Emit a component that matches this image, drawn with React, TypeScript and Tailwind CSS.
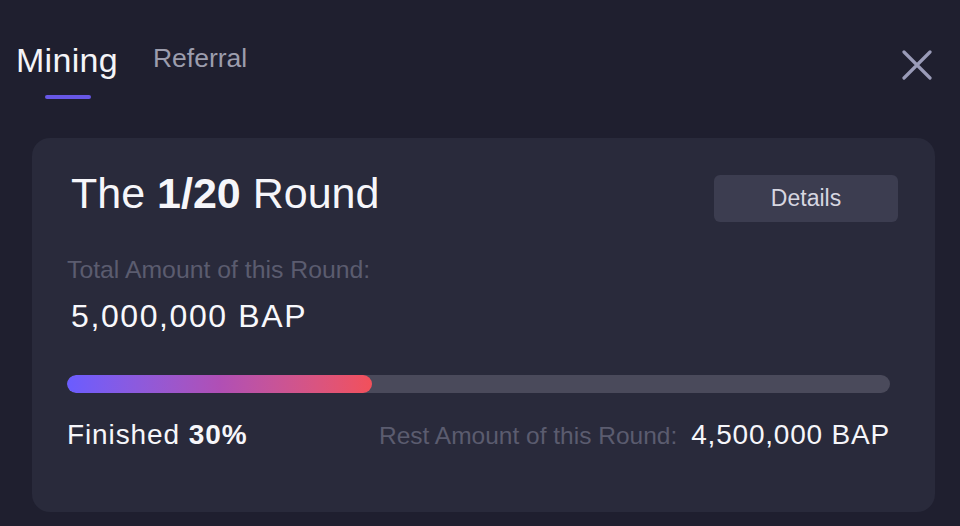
import React from "react";

export default function App() {
  const finished = 37;
  return (
    <div
      className="w-[960px] h-[526px] bg-[#1f1f2f] overflow-hidden"
      style={{ fontFamily: '"Liberation Sans", Arial, sans-serif' }}
    >
      <div className="flex items-start justify-between pl-4 pr-[28px] pt-[44px]">
        <div className="flex items-start gap-[35px]">
          <div className="flex flex-col items-center">
            <span className="text-[34px] leading-[33px] tracking-[0.3px] text-[#f4f4f8]">Mining</span>
            <span className="mt-[18px] ml-[2px] block w-[46px] h-[4px] rounded-full bg-[#6757e6]" />
          </div>
          <span className="mt-[1px] text-[26.5px] leading-[27px] text-[#9c9dad]">Referral</span>
        </div>
        <svg width="30" height="30" viewBox="0 0 30 30" className="mt-[6px]">
          <path d="M2 2 L28 28 M28 2 L2 28" stroke="#9a9bb8" strokeWidth="3.2" strokeLinecap="round" />
        </svg>
      </div>

      <div className="ml-8 mt-[39px] w-[903px] h-[374px] rounded-[18px] bg-[#292a3b] pl-[35px] pr-[45px] pt-[34px]">
        <div className="flex items-start justify-between">
          <h1 className="ml-1 text-[43px] leading-[42px] text-[#f6f6fa] font-normal">
            The <span className="font-bold">1/20</span> Round
          </h1>
          <button className="mt-[3px] -mr-2 w-[184px] h-[47px] rounded-[6px] bg-[#3c3d50] text-[23px] text-[#d6d6e0]">
            Details
          </button>
        </div>

        <div className="mt-[36px] text-[24.8px] leading-[24px] text-[#5b5c6f]">
          Total Amount of this Round:
        </div>
        <div className="mt-[18px] ml-1 text-[32px] leading-[32px] tracking-[1.6px] text-[#f8f8fc]">
          5,000,000 BAP
        </div>

        <div className="mt-[43px] h-[18px] w-full rounded-full bg-[#4a4a5b] overflow-hidden">
          <div
            className="h-full rounded-full bg-gradient-to-r from-[#6a5cff] via-[#b04fb5] to-[#f2505a]"
            style={{ width: `${finished}%` }}
          />
        </div>

        <div className="mt-[28px] flex items-baseline justify-between">
          <div className="text-[28px] leading-[28px] tracking-[0.9px] text-[#f6f6fa]">
            Finished <span className="font-bold">30%</span>
          </div>
          <div className="flex items-baseline">
            <span className="text-[24.5px] leading-[24px] text-[#5b5c6f]">Rest Amount of this Round:</span>
            <span className="ml-[14px] text-[28px] leading-[28px] tracking-[0.8px] text-[#f6f6fa]">
              4,500,000 BAP
            </span>
          </div>
        </div>
      </div>
    </div>
  );
}
